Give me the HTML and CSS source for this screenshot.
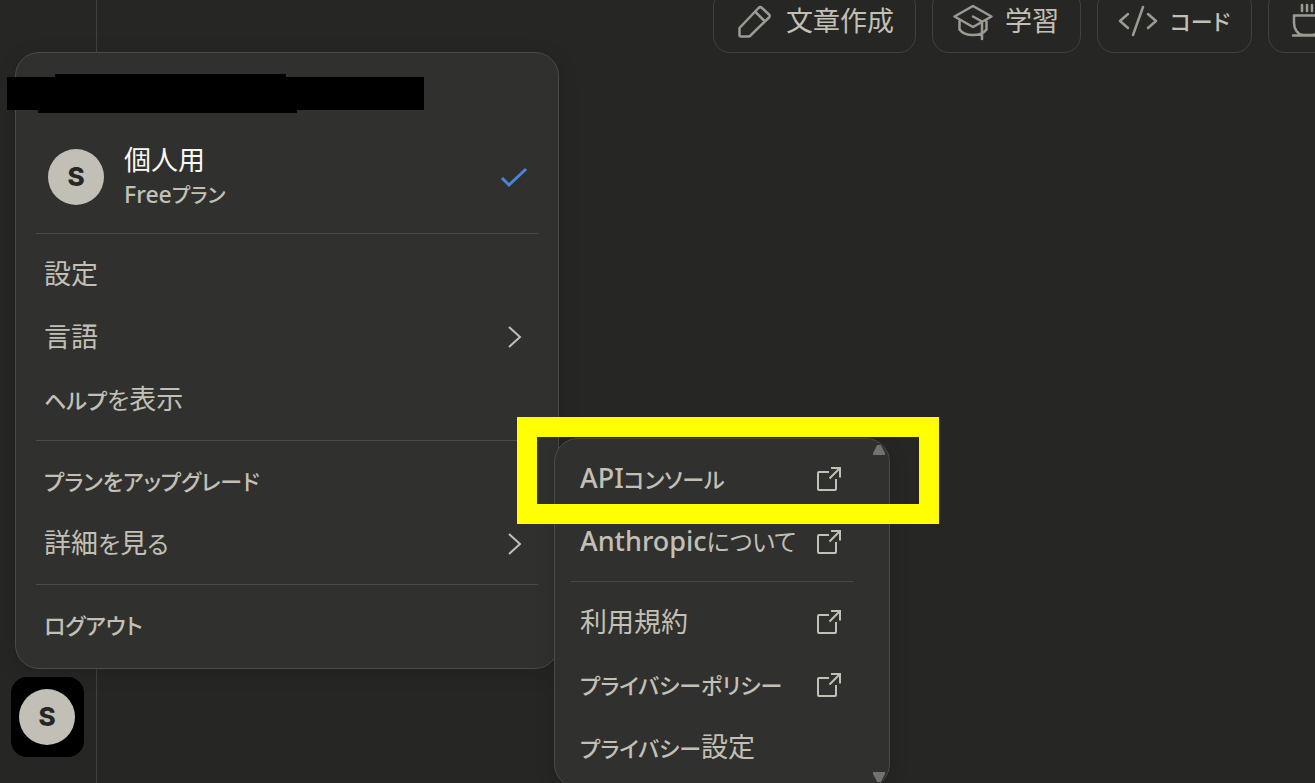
FILE: index.html
```
<!DOCTYPE html>
<html lang="ja">

<head>
    <meta charset="utf-8">
    <meta name="viewport" content="width=device-width">
    <title>アカウントメニュー</title>
    <link rel="stylesheet" href="styles.css">
</head>

<body>
    <svg class="sprite" aria-hidden="true">
        <symbol id="chevron" viewBox="0 0 16 24">
            <path d="M2 2l11 10L2 22" />
        </symbol>
        <symbol id="external" viewBox="0 0 26 26">
            <path d="M13 6H3a1 1 0 0 0-1 1v16a1 1 0 0 0 1 1h16a1 1 0 0 0 1-1V13" />
            <path d="M13.500 12.500L24 2M15 2h9v9.500" />
        </symbol>
    </svg>

    <div class="app">
        <aside class="sidebar">
            <button class="account-button" type="button"><span class="avatar">S</span></button>
        </aside>
        <main class="main">
            <div class="chips">
                <button class="chip" type="button">
                    <svg class="chip-icon" viewBox="0 0 40 40">
                        <path d="M5.500 27L24.500 7a2.500 2.500 0 0 1 3.500 0l7 6.500a2 2 0 0 1 0 3L16 35l-1.500.500H7a1.500 1.500 0 0 1-1.500-1.500zM21.500 11l9 9" />
                    </svg>
                    文章作成
                </button>
                <button class="chip" type="button">
                    <svg class="chip-icon" viewBox="0 0 40 40">
                        <path d="M20 5L1.500 15.500 20 26 38.500 15.500zM20 15.500l9 5v17.500M6.500 20v8.500C9 32 14 34 20 34s11-2 13.500-5.500V20" />
                    </svg>
                    学習
                </button>
                <button class="chip" type="button">
                    <svg class="chip-icon" viewBox="0 0 40 40">
                        <path d="M10 13l-8 7 8 7M30 13l8 7-8 7M25 6L15 34" />
                    </svg>
                    <span class="katakana">コード</span>
                </button>
                <button class="chip" type="button" aria-label="日常生活">
                    <svg class="chip-icon" viewBox="0 0 40 40">
                        <path d="M13 4v6M18 4v6M23 4v6M5 14.500h27V22c0 6-4 12-9 12h-9c-5 0-9-6-9-12zM32 18h3a4 4 0 0 1 0 9h-4M4 34.500h30" />
                    </svg>
                </button>
            </div>
        </main>
    </div>

    <nav class="menu account-menu">
        <div class="email"></div>
        <button class="profile" type="button">
            <span class="avatar">S</span>
            <span class="profile-text">
                <span class="profile-name">個人用</span>
                <span class="profile-plan">Free<span class="katakana">プラン</span></span>
            </span>
            <svg class="check" viewBox="0 0 28 22">
                <path d="M2 12l7 7L26 3" />
            </svg>
        </button>
        <hr>
        <button class="item" type="button">設定</button>
        <button class="item" type="button">言語<svg class="chevron"><use href="#chevron" /></svg></button>
        <button class="item" type="button">
            <span><span class="katakana">ヘルプ</span><span class="hiragana">を</span>表示</span>
        </button>
        <hr>
        <button class="item" type="button"><span class="katakana">プランをアップグレード</span></button>
        <button class="item" type="button">
            <span>詳細<span class="hiragana">を</span>見<span class="hiragana">る</span></span>
            <svg class="chevron"><use href="#chevron" /></svg>
        </button>
        <hr>
        <button class="item" type="button"><span class="katakana">ログアウト</span></button>
    </nav>

    <nav class="menu sub-menu">
        <span class="arrow arrow-up"></span>
        <a class="item" href="#">
            <span><span class="latin">API</span><span class="katakana">コンソール</span></span>
            <svg class="external"><use href="#external" /></svg>
        </a>
        <a class="item" href="#">
            <span><span class="latin">Anthropic</span><span class="hiragana">について</span></span>
            <svg class="external"><use href="#external" /></svg>
        </a>
        <hr>
        <a class="item" href="#">利用規約<svg class="external"><use href="#external" /></svg></a>
        <a class="item" href="#">
            <span class="katakana">プライバシーポリシー</span>
            <svg class="external"><use href="#external" /></svg>
        </a>
        <button class="item" type="button"><span><span class="katakana">プライバシー</span>設定</span></button>
        <span class="arrow arrow-down"></span>
    </nav>

    <svg class="redaction" viewBox="0 0 418 40">
        <path d="M1 4h48V1h231v3h138v33H291v3H32v-3H1z" />
    </svg>
    <div class="highlight"></div>
</body>

</html>
```
FILE: styles.css
```
* {
    box-sizing: border-box;
}

body {
    margin: 0;
    overflow: hidden;
    background-color: #262624;
    color: #c2c0b6;
    font-family: "Noto Sans", "Noto Sans CJK JP", sans-serif;
    font-size: 27px;
    line-height: 36px;
    font-feature-settings: "palt";
}

button {
    padding: 0;
    border: none;
    background: none;
    color: inherit;
    font: inherit;
    font-feature-settings: inherit;
    text-align: left;
    cursor: pointer;
}

a {
    color: inherit;
    text-decoration: none;
}

svg {
    flex-shrink: 0;
    fill: none;
    stroke: currentColor;
    stroke-width: 2;
}

hr {
    margin: 9px 0 8px;
    border: none;
    border-top: 1px solid #4a4a47;
}

.sprite {
    display: none;
}

/* kana are set a step smaller than kanji */
.katakana {
    font-size: 22px;
    font-weight: 500;
}

.hiragana {
    font-size: 24px;
}

.latin {
    font-weight: 500;
}

.app {
    display: flex;
    height: 100vh;
}

.sidebar {
    display: flex;
    flex-direction: column;
    justify-content: flex-end;
    width: 97px;
    padding: 0 0 26px 11px;
    border-right: 1px solid #41413e;
}

.account-button {
    width: 73px;
    padding: 12px 8px;
    border-radius: 16px;
    background-color: #000;
}

.avatar {
    display: flex;
    align-items: center;
    justify-content: center;
    flex-shrink: 0;
    width: 56px;
    height: 56px;
    border-radius: 50%;
    background-color: #c2c0b6;
    color: #262624;
    font-family: Inter, sans-serif;
    font-size: 26px;
    font-weight: 800;
}

.main {
    flex: 1;
    min-width: 0;
    overflow: hidden;
}

.chips {
    display: flex;
    gap: 16px;
    margin: -11px 0 0 616px;
}

.chip {
    display: flex;
    align-items: center;
    flex-shrink: 0;
    gap: 12px;
    height: 64px;
    padding: 0 21px 0 20px;
    border: 1px solid #41413e;
    border-radius: 17px;
    white-space: nowrap;
}

.chip-icon {
    width: 40px;
    height: 40px;
    color: #9c9a92;
    stroke-width: 2.5;
    stroke-linecap: round;
    stroke-linejoin: round;
}

.menu {
    position: absolute;
    border: 1px solid #4a4a47;
    border-radius: 24px;
    background-color: #30302e;
    box-shadow: 0 4px 20px rgba(0, 0, 0, 0.15);
}

.account-menu {
    top: 52px;
    left: 15px;
    width: 544px;
    padding: 12px 20px;
}

.email {
    height: 64px;
}

.profile {
    display: flex;
    align-items: center;
    gap: 20px;
    width: 100%;
    height: 95px;
    padding: 0 10px 0 12px;
}

.profile-text {
    display: flex;
    flex: 1;
    flex-direction: column;
}

.profile-name {
    color: #faf9f5;
}

.profile-plan {
    font-size: 23px;
    font-weight: 500;
    line-height: 32px;
}

.profile-plan .katakana {
    font-size: 20px;
}

.check {
    width: 28px;
    height: 22px;
    color: #4a84dc;
    stroke-width: 3;
}

.item {
    display: flex;
    align-items: center;
    justify-content: space-between;
    width: 100%;
    height: 63px;
    padding: 0 11px 0 9px;
    white-space: nowrap;
}

.account-menu .item {
    padding: 0 15px 0 8px;
}

.chevron {
    width: 16px;
    height: 24px;
}

.external {
    width: 26px;
    height: 26px;
}

.sub-menu {
    top: 438px;
    left: 554px;
    width: 336px;
    padding: 8px 36px 8px 16px;
}

.sub-menu hr {
    margin: 8px 0;
}

.arrow {
    position: absolute;
    right: 4px;
    width: 12px;
    height: 10px;
    background-color: #72726f;
}

.arrow-up {
    top: 6px;
    clip-path: polygon(35% 0, 65% 0, 100% 80%, 100% 100%, 0 100%, 0 80%);
}

.arrow-down {
    bottom: 5px;
    clip-path: polygon(0 0, 100% 0, 100% 20%, 65% 100%, 35% 100%, 0 20%);
}

.redaction {
    position: absolute;
    top: 73px;
    left: 6px;
    width: 418px;
    height: 40px;
    fill: #000;
    stroke: none;
}

.highlight {
    position: absolute;
    top: 417px;
    left: 517px;
    width: 422px;
    height: 107px;
    border: 20px solid #ff0;
    pointer-events: none;
}
```
